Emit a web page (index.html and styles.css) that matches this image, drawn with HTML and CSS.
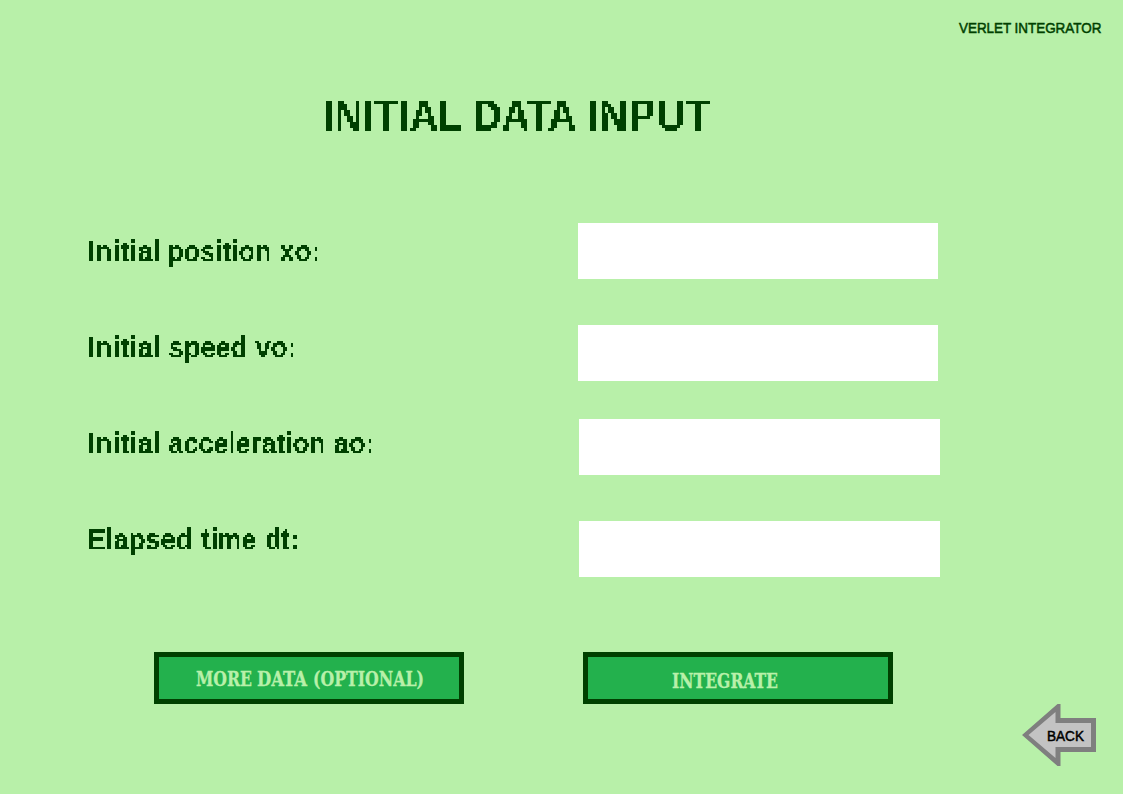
FILE: index.html
```html
<!DOCTYPE html>
<html lang="en">
<head>
<meta charset="utf-8">
<title>Verlet Integrator</title>
<link rel="stylesheet" href="styles.css">
</head>
<body>
<svg class="defs" width="0" height="0" aria-hidden="true">
  <!-- Coarse pixel look: sample one point per cell, then grow it to fill the cell -->
  <filter id="pixel3" filterUnits="userSpaceOnUse" x="0" y="2" width="399" height="48" color-interpolation-filters="sRGB">
    <feFlood x="1" y="3" width="1" height="1" flood-color="#000" result="dot"/>
    <feComposite in="dot" in2="dot" operator="over" x="0" y="2" width="3" height="3"/>
    <feTile result="grid"/>
    <feComposite in="SourceGraphic" in2="grid" operator="in"/>
    <feComponentTransfer><feFuncA type="discrete" tableValues="0 1"/></feComponentTransfer>
    <feMorphology operator="dilate" radius="1"/>
  </filter>
  <filter id="pixel2" filterUnits="userSpaceOnUse" x="0" y="0" width="300" height="36" color-interpolation-filters="sRGB">
    <feFlood x="0" y="0" width="1" height="1" flood-color="#000" result="dot"/>
    <feComposite in="dot" in2="dot" operator="over" x="0" y="0" width="2" height="2"/>
    <feTile result="grid"/>
    <feComposite in="SourceGraphic" in2="grid" operator="in"/>
    <feComponentTransfer result="a"><feFuncA type="discrete" tableValues="0 1"/></feComponentTransfer>
    <feOffset in="a" dx="1" dy="0" result="b"/>
    <feMerge result="c"><feMergeNode in="a"/><feMergeNode in="b"/></feMerge>
    <feOffset in="c" dx="0" dy="1" result="d"/>
    <feMerge><feMergeNode in="c"/><feMergeNode in="d"/></feMerge>
  </filter>
</svg>
<main class="screen">
  <header class="brand">
    <svg class="line" width="150" height="20"><text class="small" y="15"><tspan x="2" textLength="52" lengthAdjust="spacingAndGlyphs">VERLET</tspan> <tspan x="57.5" textLength="87" lengthAdjust="spacingAndGlyphs">INTEGRATOR</tspan></text></svg>
  </header>
  <h1 class="title">
    <svg class="line" width="400" height="50"><text class="heading" y="41"><tspan x="3" textLength="139" lengthAdjust="spacingAndGlyphs">INITIAL</tspan> <tspan x="153" textLength="102" lengthAdjust="spacingAndGlyphs">DATA</tspan> <tspan x="267" textLength="124" lengthAdjust="spacingAndGlyphs">INPUT</tspan></text></svg>
  </h1>
  <form class="form">
    <div class="labels">
      <label for="position"><svg class="line" width="300" height="36"><text class="prompt" y="26"><tspan x="0" textLength="73" lengthAdjust="spacingAndGlyphs">Initial</tspan> <tspan x="80" textLength="104" lengthAdjust="spacingAndGlyphs">position</tspan> <tspan x="192" textLength="41" lengthAdjust="spacingAndGlyphs">xo:</tspan></text></svg></label>
      <label for="speed"><svg class="line" width="300" height="36"><text class="prompt" y="26"><tspan x="0" textLength="73" lengthAdjust="spacingAndGlyphs">Initial</tspan> <tspan x="81" textLength="79" lengthAdjust="spacingAndGlyphs">speed</tspan> <tspan x="168" textLength="41" lengthAdjust="spacingAndGlyphs">vo:</tspan></text></svg></label>
      <label for="acceleration"><svg class="line" width="300" height="36"><text class="prompt" y="26"><tspan x="0" textLength="73" lengthAdjust="spacingAndGlyphs">Initial</tspan> <tspan x="81" textLength="157" lengthAdjust="spacingAndGlyphs">acceleration</tspan> <tspan x="246" textLength="41" lengthAdjust="spacingAndGlyphs">ao:</tspan></text></svg></label>
      <label for="elapsed"><svg class="line" width="300" height="36"><text class="prompt" y="26"><tspan x="0" textLength="105" lengthAdjust="spacingAndGlyphs">Elapsed</tspan> <tspan x="114" textLength="55" lengthAdjust="spacingAndGlyphs">time</tspan> <tspan x="178" textLength="33" lengthAdjust="spacingAndGlyphs">dt:</tspan></text></svg></label>
    </div>
    <div class="fields">
      <input class="field" id="position">
      <input class="field" id="speed">
      <input class="field field-wide field-near" id="acceleration">
      <input class="field field-wide" id="elapsed">
    </div>
  </form>
  <div class="actions">
    <button class="action" type="button"><svg class="line" width="300" height="42"><text class="caption" y="29"><tspan x="37" textLength="56" lengthAdjust="spacingAndGlyphs">MORE</tspan> <tspan x="98" textLength="50" lengthAdjust="spacingAndGlyphs">DATA</tspan> <tspan x="154" textLength="111" lengthAdjust="spacingAndGlyphs">(OPTIONAL)</tspan></text></svg></button>
    <button class="action" type="button"><svg class="line" width="300" height="42"><text class="caption" x="84" y="31" textLength="106" lengthAdjust="spacingAndGlyphs">INTEGRATE</text></svg></button>
  </div>
  <button class="back" type="button">
    <svg class="line" width="76" height="64"><path class="arrow-edge" d="M1 31 36.500 0H39.500V14H75V48H39.500V62H36.500Z"/><path class="arrow-face" d="M7.500 31 34.500 8V19H70V43H34.500V54Z"/><text class="small back-text" x="26" y="37" textLength="37" lengthAdjust="spacingAndGlyphs">BACK</text></svg>
  </button>
</main>
</body>
</html>
```
FILE: styles.css
```css
body { margin: 0; background: #b8f0a9; }
.defs { position: absolute; }
.screen {
  display: flex; flex-direction: column; box-sizing: border-box;
  width: 1123px; height: 794px; overflow: hidden;
  padding-top: 18px; background: #b8f0a9;
}
.line { display: block; }
text { fill: #004000; font-family: "Liberation Sans", Arial, sans-serif; }
.brand { align-self: flex-end; margin-right: 16px; }
.small { font-size: 14.500px; stroke: #004000; stroke-width: 0.5px; }
.title { margin: 52px 0 0 320px; }
.heading { font-size: 43.500px; font-weight: bold; filter: url(#pixel3); }
.form { display: flex; margin-top: 83px; }
.labels { display: flex; flex-direction: column; gap: 60px; width: 491px; padding: 12px 0 0 87px; }
.prompt { font-size: 29px; font-weight: bold; filter: url(#pixel2); }
.fields { display: flex; flex-direction: column; gap: 46px; }
.field { box-sizing: border-box; width: 360px; height: 56px; margin: 0; padding: 0 12px; border: 0; border-radius: 0; background: #fff; font: 24px "Liberation Sans", sans-serif; }
.field-wide { width: 361px; margin-left: 1px; }
.field-near { margin-top: -8px; }
.actions { display: flex; gap: 119px; margin: 75px 0 0 154px; }
.action { box-sizing: border-box; width: 310px; height: 52px; padding: 0; border: 5px solid #004000; background: #23b14d; }
.caption { fill: #b8f0a9; stroke: #b8f0a9; stroke-width: 0.3px; font: bold 20.500px "DejaVu Serif Condensed", "DejaVu Serif", serif; }
.back { align-self: flex-end; width: 76px; height: 64px; margin-right: 26px; padding: 0; border: 0; background: none; }
.arrow-edge { fill: #7f7f7f; }
.arrow-face { fill: #c3c3c3; }
.back-text { fill: #000; stroke: #000; }
```
